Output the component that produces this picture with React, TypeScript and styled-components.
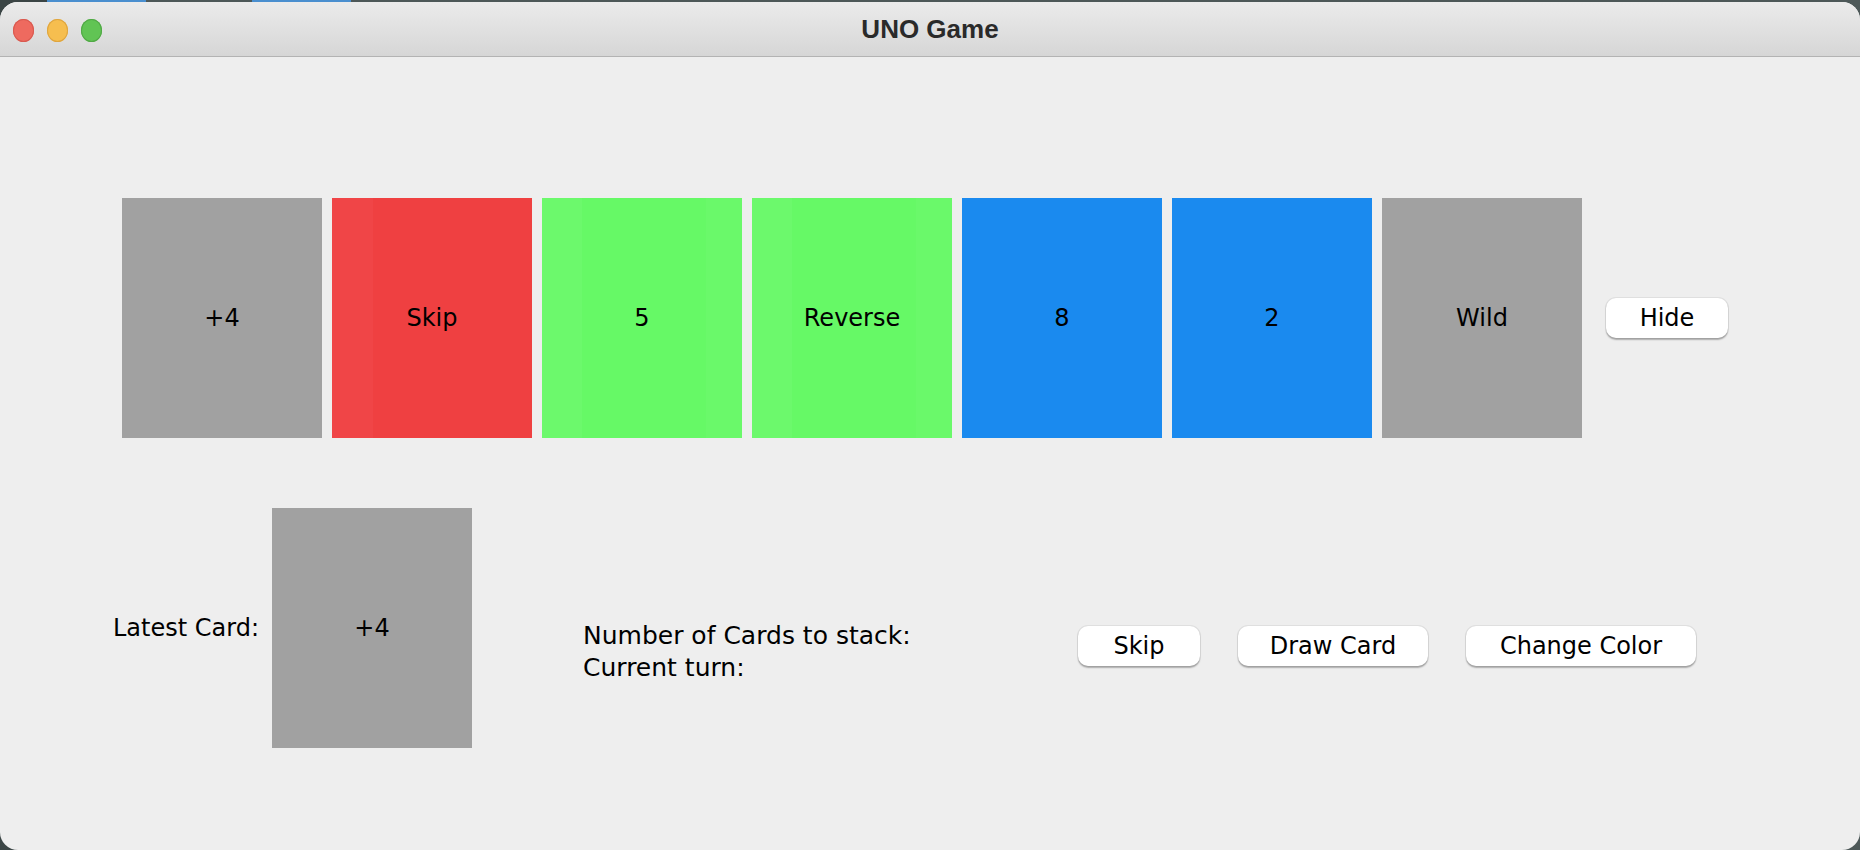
import React from "react";
import styled, { createGlobalStyle } from "styled-components";

const GlobalStyle = createGlobalStyle`
  html, body {
    margin: 0;
    padding: 0;
    background: #3b4545;
    overflow: hidden;
  }
  #root {
    width: 1860px;
    height: 850px;
  }
`;

const Desktop = styled.div`
  width: 1860px;
  height: 850px;
  padding-top: 2px;
  box-sizing: border-box;
  background: linear-gradient(90deg, #3b4545 0 47px, #4a8fcf 47px 146px, #4d5858 146px 252px, #4a8fcf 252px 351px, #4d5858 351px 100%);
`;

const Window = styled.div`
  width: 1860px;
  height: 848px;
  border-radius: 18px;
  overflow: hidden;
  background: #eeeeee;
  display: flex;
  flex-direction: column;
  font-family: "DejaVu Sans", "Liberation Sans", sans-serif;
  color: #000;
`;

const TitleBar = styled.div`
  height: 54px;
  flex: 0 0 auto;
  background: linear-gradient(180deg, #ebebeb 0%, #d6d6d6 100%);
  border-bottom: 1px solid #b3b3b3;
  display: grid;
  grid-template-columns: 1fr auto 1fr;
  align-items: center;
  padding: 0 13px;
`;

const Lights = styled.div`
  display: flex;
  align-items: center;
  gap: 13px;
  padding-top: 2px;
`;

const Light = styled.span<{ $c: string; $b: string }>`
  display: block;
  width: 21px;
  height: 23px;
  border-radius: 50%;
  background: ${(p) => p.$c};
  box-shadow: inset 0 0 0 1px ${(p) => p.$b};
`;

const Title = styled.div`
  font-family: "Liberation Sans", Arial, sans-serif;
  font-weight: 700;
  font-size: 26px;
  color: #2a2a2a;
`;

const Content = styled.div`
  flex: 1 1 auto;
  display: flex;
  flex-direction: column;
  padding-top: 141px;
`;

const HandRow = styled.div`
  display: flex;
  align-items: center;
  gap: 10px;
  padding-left: 122px;
`;

const Card = styled.div<{ $bg: string }>`
  width: 200px;
  height: 240px;
  flex: 0 0 auto;
  display: flex;
  align-items: center;
  justify-content: center;
  background: ${(p) => p.$bg};
  font-size: 24px;
  color: #000;
`;

const Button = styled.button<{ $w: number }>`
  width: ${(p) => p.$w}px;
  height: 40px;
  flex: 0 0 auto;
  background: #ffffff;
  border: none;
  border-radius: 10px;
  box-shadow: 0 0 0 1px rgba(0, 0, 0, 0.06), 0 1.5px 1.5px rgba(0, 0, 0, 0.28);
  font-family: "DejaVu Sans", "Liberation Sans", sans-serif;
  font-size: 24px;
  color: #000;
  padding: 0;
  display: flex;
  align-items: center;
  justify-content: center;
`;

const HideButton = styled(Button)`
  margin-left: 14px;
`;

const BottomRow = styled.div`
  display: flex;
  align-items: center;
  margin-top: 70px;
  padding-left: 113px;
`;

const LatestLabel = styled.div`
  width: 159px;
  font-size: 24px;
  white-space: nowrap;
`;

const SideGroup = styled.div`
  display: flex;
  align-items: center;
  margin-top: 36px;
  margin-left: 111px;
`;

const InfoLabels = styled.div`
  width: 495px;
  display: flex;
  flex-direction: column;
  font-size: 25px;
  line-height: 32px;
  padding-top: 12px;
  white-space: nowrap;
`;

const Actions = styled.div`
  display: flex;
  align-items: center;
  gap: 38px;
`;

const GREY = "#a1a1a1";
const RED = "linear-gradient(90deg, #f04547 0 41px, #ef4041 41px 100%)";
const GREEN = "linear-gradient(90deg, #6cf96c 0 40px, #66f966 40px calc(100% - 36px), #6af96a calc(100% - 36px) 100%)";
const BLUE = "#1a8aef";

const hand = [
  { label: "+4", bg: GREY },
  { label: "Skip", bg: RED },
  { label: "5", bg: GREEN },
  { label: "Reverse", bg: GREEN },
  { label: "8", bg: BLUE },
  { label: "2", bg: BLUE },
  { label: "Wild", bg: GREY },
];

export default function App() {
  return (
    <>
      <GlobalStyle />
      <Desktop>
        <Window>
          <TitleBar>
            <Lights>
              <Light $c="#ee6a5f" $b="#d85a50" />
              <Light $c="#f6be4f" $b="#dea540" />
              <Light $c="#61c454" $b="#51a846" />
            </Lights>
            <Title>UNO Game</Title>
            <div />
          </TitleBar>
          <Content>
            <HandRow>
              {hand.map((c, i) => (
                <Card key={i} $bg={c.bg}>
                  {c.label}
                </Card>
              ))}
              <HideButton $w={122}>Hide</HideButton>
            </HandRow>
            <BottomRow>
              <LatestLabel>Latest Card:</LatestLabel>
              <Card $bg={GREY}>+4</Card>
              <SideGroup>
                <InfoLabels>
                  <span>Number of Cards to stack:</span>
                  <span>Current turn:</span>
                </InfoLabels>
                <Actions>
                  <Button $w={122}>Skip</Button>
                  <Button $w={190}>Draw Card</Button>
                  <Button $w={230}>Change Color</Button>
                </Actions>
              </SideGroup>
            </BottomRow>
          </Content>
        </Window>
      </Desktop>
    </>
  );
}
